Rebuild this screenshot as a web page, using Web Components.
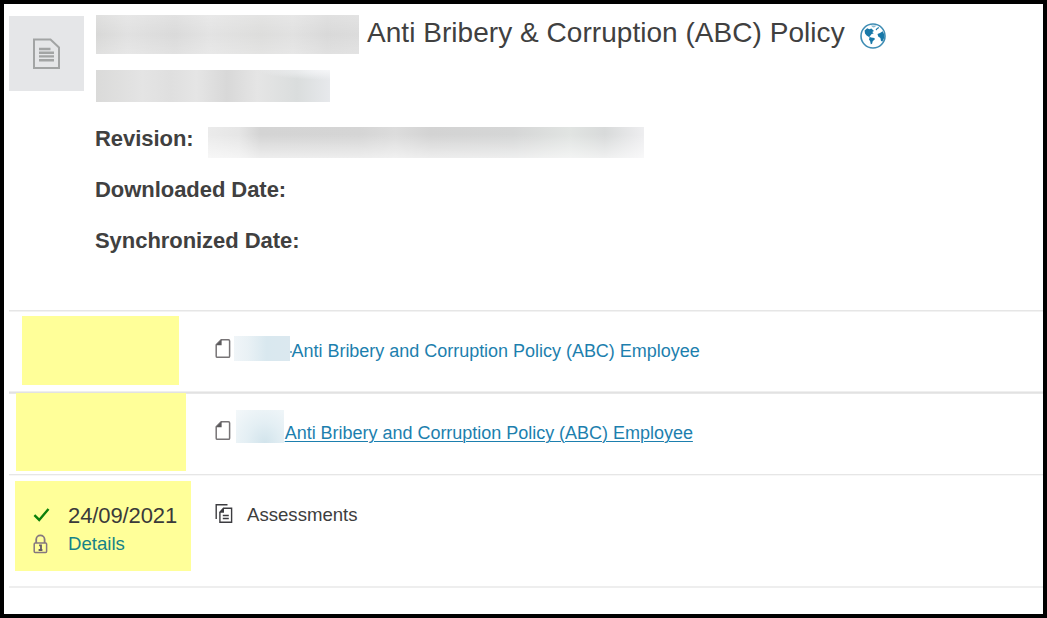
<!DOCTYPE html>
<html lang="en">
<head>
<meta charset="utf-8">
<title>Anti Bribery &amp; Corruption (ABC) Policy</title>
<style>
  html, body {
    margin: 0;
    height: 100%;
  }
  body {
    --text: #404040;
    --link: #1d7fae;
    font-family: "Liberation Sans", Arial, sans-serif;
    color: var(--text);
  }
</style>
</head>
<body>

<!-- Outer frame with the header and the list of rows -->
<template id="policy-page">
  <style>
    :host {
      display: flex;
      flex-direction: column;
      box-sizing: border-box;
      width: 1047px;
      height: 618px;
      border: 4px solid #000;
      padding-left: 5px;
      background: #fff;
      overflow: hidden;
    }
    .head { height: 306px; flex: none; }
    .rows { display: flex; flex-direction: column; flex: 1; }
  </style>
  <div class="head"><slot name="head"></slot></div>
  <div class="rows"><slot></slot></div>
</template>

<!-- Blurred out part of a text; size and shades come from custom properties -->
<template id="redacted-text">
  <style>
    :host {
      display: block;
      flex: none;
      width: var(--w);
      height: var(--h);
      background: var(--shade, #e2e2e2);
    }
  </style>
</template>

<template id="policy-header">
  <style>
    :host { display: flex; gap: 12px; padding-top: 12px; }
    .thumb {
      display: flex;
      align-items: center;
      justify-content: center;
      width: 75px;
      height: 75px;
      flex: none;
      background: #e5e6e8;
    }
    .body { flex: 1; }
    .title { display: flex; margin-top: -1px; height: 39px; }
    h1 {
      margin: 0 0 0 8px;
      font-size: 28px;
      line-height: 35px;
      font-weight: normal;
      letter-spacing: 0.04px;
      white-space: nowrap;
    }
    .globe { margin: 8px 0 0 15px; width: 26px; height: 26px; }
    .sub { height: 32px; margin: 16px 0 11px; }
    svg { display: block; }
  </style>
  <div class="thumb">
    <svg width="27" height="31" viewBox="0 0 27 31" fill="none" stroke="#a2a4a4" stroke-width="2">
      <path d="M1 1.5H17.5L26 9.5V30H1Z"/>
      <path d="M6 11H17.5M6 14.8H21M6 18.4H21M6 22.2H21" stroke-width="2.4"/>
    </svg>
  </div>
  <div class="body">
    <div class="title">
      <slot name="prefix"></slot>
      <h1><slot name="title"></slot></h1>
      <svg class="globe" viewBox="0 0 26 26">
        <circle cx="13" cy="13" r="12" fill="#fff" stroke="#3f8db4" stroke-width="1.6"/>
        <g fill="#1878a8">
          <path d="M4.6 7.6L7.2 5.2L9.3 6.2L11.4 5.6L14 8L12.2 9.1L13.7 10.6L11.6 11.1L10.5 12.4L9.3 13.6L11 14.2L10.1 14.8L6.6 12.6L5 10.5Z"/>
          <path d="M9.6 14.3L14.4 15L14.9 16.3L12.7 18.2L12.1 20.7L10.8 21.3L10.1 18.1L9 16.7Z"/>
          <path d="M11 2.6L16.4 2.4L15 4.1L13.6 4.6L12.3 4Z" opacity="0.5"/>
          <path d="M15.6 6.2L18.3 3.9L19.2 5L17.5 6L16.4 7.4Z"/>
          <path d="M17.5 11L20 9.9L22.7 8.2L24.3 11.4L24.1 15.1L22.4 18.4L21 18L20.4 14.9L18.2 13.6Z"/>
        </g>
      </svg>
    </div>
    <div class="sub"><slot name="sub"></slot></div>
    <slot></slot>
  </div>
</template>

<template id="policy-field">
  <style>
    :host {
      display: flex;
      align-items: flex-start;
      height: 51px;
      font-size: 22px;
      line-height: 51px;
      font-weight: bold;
    }
    .label {
      min-width: 113px;
      margin-left: -1px;
      letter-spacing: -0.05px;
      white-space: nowrap;
    }
    .value { padding-top: 14px; }
  </style>
  <span class="label"><slot name="label"></slot></span>
  <span class="value"><slot></slot></span>
</template>

<!-- One row: highlighted status cell at the left, item at the right -->
<template id="policy-row">
  <style>
    :host {
      display: flex;
      flex: none;
      box-sizing: border-box;
      height: var(--row-h);
      background: var(--line) no-repeat;
    }
    .status { width: 206px; flex: none; }
    .mark {
      box-sizing: border-box;
      width: var(--mark-w);
      height: var(--mark-h);
      margin: var(--mark-y) 0 0 var(--mark-x);
      background: #ffff99;
    }
    .item {
      display: flex;
      align-items: flex-start;
      padding-top: var(--item-y, 24px);
    }
  </style>
  <div class="status"><div class="mark"><slot name="status"></slot></div></div>
  <div class="item"><slot></slot></div>
</template>

<template id="item-icon">
  <style>
    :host { display: block; flex: none; width: 19px; height: 20px; margin-top: 5px; }
    svg { display: none; }
    :host([type="page"]) .page, :host([type="pages"]) .pages { display: block; }
  </style>
  <svg class="page" width="19" height="20" viewBox="0 0 19 20">
    <path d="M6.2 0.8H13.5Q14.6 0.8 14.6 1.9V17.2Q14.6 18.3 13.5 18.3H2.3Q1.2 18.3 1.2 17.2V5.8Z" fill="#fff" stroke="#777476" stroke-width="1.5"/>
    <path d="M6.6 0.6V6.2H1Z" fill="#5b5a5c"/>
  </svg>
  <svg class="pages" width="19" height="20" viewBox="0 0 19 20" fill="none" stroke="#3c3c40" stroke-width="1.4">
    <path d="M1.2 15V0.7H12.5"/>
    <path d="M8.5 4.2H16.6V18.2H4.9V8.2Z" fill="#fff"/>
    <path d="M9 3.7V8.7H4.4Z" fill="#3c3c40" stroke="none"/>
    <path d="M7.8 11.5H13.8M7.8 14.5H13.8"/>
  </svg>
</template>

<template id="item-link">
  <style>
    :host { display: block; }
    a {
      display: block;
      font-size: 18px;
      line-height: 24px;
      letter-spacing: -0.02px;
      color: var(--link);
      text-decoration: none;
      white-space: nowrap;
    }
    :host([underlined]) a { text-decoration: underline; text-underline-offset: 2px; text-decoration-thickness: 1px; }
  </style>
  <a><slot></slot></a>
</template>

<template id="item-label">
  <style>
    :host { display: block; font-size: 18.6px; line-height: 24px; color: #3d3d3d; }
  </style>
  <slot></slot>
</template>

<!-- Completion date with a check, and a locked details link below it -->
<template id="completion-status">
  <style>
    :host {
      display: grid;
      grid-template-columns: 35px auto;
      grid-template-rows: 28px 28px;
      justify-content: start;
      align-items: center;
      padding: 21px 0 0 18px;
    }
    .date { font-size: 22px; line-height: 28px; color: #3a3a3a; letter-spacing: -0.1px; }
    .details { font-size: 18.6px; line-height: 28px; color: #168288; }
    svg { display: block; }
  </style>
  <svg width="18" height="18" viewBox="0 0 18 18" fill="none">
    <path d="M1.4 8.2L6.2 12.9L15.5 1.9" stroke="#0b800b" stroke-width="2.4"/>
  </svg>
  <span class="date"><slot name="date"></slot></span>
  <svg width="18" height="20" viewBox="0 0 18 20" fill="none" stroke="#85777f" stroke-width="1.8">
    <path d="M3.2 9V5.5A4.2 4.2 0 0 1 11.6 5.5V9"/>
    <rect x="1.2" y="8.9" width="12.4" height="9.6" rx="1" stroke-width="1.5"/>
    <path d="M6.1 11.3H8V16M5.6 16H9.4" stroke="#635968"/>
  </svg>
  <a class="details"><slot></slot></a>
</template>

<style>
  .name { --w: 263px; --h: 39px; --shade: linear-gradient(#fff3, #fff0 50%, #fff3), linear-gradient(90deg, #d8d8d7, #e1e1e1 12%, #dadada 30%, #e3e3e3 43%, #dddddc 63%, #e1e1e1 75%, #d9d9d9 88%, #dcdcdc); }
  .code { --w: 234px; --h: 32px; --shade: radial-gradient(ellipse at 100% 0, #f5f6f8, #f5f6f800 22%), linear-gradient(90deg, #dadad9, #e4e4e4 20%, #dfdfdf 32%, #e5e5e5 43%, #d8d8d8 56%, #e5e5e5 69%, #dadddd 86%, #e7e9ec); }
  .rev { --w: 436px; --h: 31px; --shade: linear-gradient(#fff0 25%, #fff9), linear-gradient(90deg, #ebebeb 0%, #e6e6e6 7%, #d4d4d4 12%, #d5d5d5 35%, #dcdcdc 43%, #d3d3d3 51%, #d5d6d6 70%, #e1e4e2 83%, #d8dada 91%, #eeeef0); }
  .ref1 { --w: 56px; --h: 25px; --shade: linear-gradient(90deg, #f0f5f8, #e9f1f5 25%, #d9e8ef 58%, #dbe8ef); margin: 2px 0 0; }
  .ref2 { --w: 48px; --h: 33px; --shade: radial-gradient(ellipse at 60% 100%, #d2e4ec, #e4eff4 45%, #f4f8fa 100%); margin: -6px 0 0 2px; }
  .dash { width: 2px; height: 2px; margin: 17px -1px 0 0; background: #7fb5d0; }
</style>

<policy-page>
  <policy-header slot="head">
    <redacted-text class="name" slot="prefix"></redacted-text>
    <span slot="title">Anti Bribery &amp; Corruption (ABC) Policy</span>
    <redacted-text class="code" slot="sub"></redacted-text>
    <policy-field>
      <span slot="label">Revision:</span>
      <redacted-text class="rev"></redacted-text>
    </policy-field>
    <policy-field><span slot="label">Downloaded Date:</span></policy-field>
    <policy-field><span slot="label">Synchronized Date:</span></policy-field>
  </policy-header>

  <policy-row style="--row-h:81px; --line:linear-gradient(#e6e6e6 1px, #f2f2f2 1px 2px, #fff0 2px); --mark-x:13px; --mark-y:6px; --mark-w:157px; --mark-h:69px">
    <item-icon type="page"></item-icon>
    <redacted-text class="ref1"></redacted-text>
    <span class="dash"></span>
    <item-link style="margin:5px 0 0 0.5px">Anti Bribery and Corruption Policy (ABC) Employee</item-link>
  </policy-row>

  <policy-row style="--row-h:83px; --line:linear-gradient(#efefef 1px, #e2e2e2 1px 2px, #e8e8e8 2px 3px, #fff0 3px); --mark-x:7px; --mark-y:2px; --mark-w:170px; --mark-h:78px; --item-y:25px">
    <item-icon type="page"></item-icon>
    <redacted-text class="ref2"></redacted-text>
    <item-link underlined style="margin:5px 0 0 0.7px">Anti Bribery and Corruption Policy (ABC) Employee</item-link>
  </policy-row>

  <policy-row style="--row-h:112px; --line:linear-gradient(#e6e6e6 1px, #f7f7f7 1px 2px, #fff0 2px); --mark-x:6px; --mark-y:7px; --mark-w:176px; --mark-h:90px; --item-y:25px">
    <completion-status slot="status">
      <span slot="date">24/09/2021</span>
      Details
    </completion-status>
    <item-icon type="pages"></item-icon>
    <item-label style="margin:4px 0 0 13px">Assessments</item-label>
  </policy-row>

  <policy-row style="--row-h:28px; --line:linear-gradient(#eeeeee 2px, #fff0 2px); --mark-w:0; --mark-h:0; --mark-x:0; --mark-y:0"></policy-row>
</policy-page>

<script>
// Base class: clones the template with the same id as the tag
class TemplateElement extends HTMLElement {
  constructor() {
    super();
    const shadow = this.attachShadow({mode: 'open'});
    const template = document.getElementById(this.localName);
    shadow.appendChild(template.content.cloneNode(true));
  }
}

class PolicyPage extends TemplateElement {}
class PolicyHeader extends TemplateElement {}
class PolicyField extends TemplateElement {}
class PolicyRow extends TemplateElement {}
class RedactedText extends TemplateElement {}
class ItemIcon extends TemplateElement {}
class ItemLink extends TemplateElement {}
class ItemLabel extends TemplateElement {}
class CompletionStatus extends TemplateElement {}

customElements.define('policy-page', PolicyPage);
customElements.define('policy-header', PolicyHeader);
customElements.define('policy-field', PolicyField);
customElements.define('policy-row', PolicyRow);
customElements.define('redacted-text', RedactedText);
customElements.define('item-icon', ItemIcon);
customElements.define('item-link', ItemLink);
customElements.define('item-label', ItemLabel);
customElements.define('completion-status', CompletionStatus);
</script>
</body>
</html>
